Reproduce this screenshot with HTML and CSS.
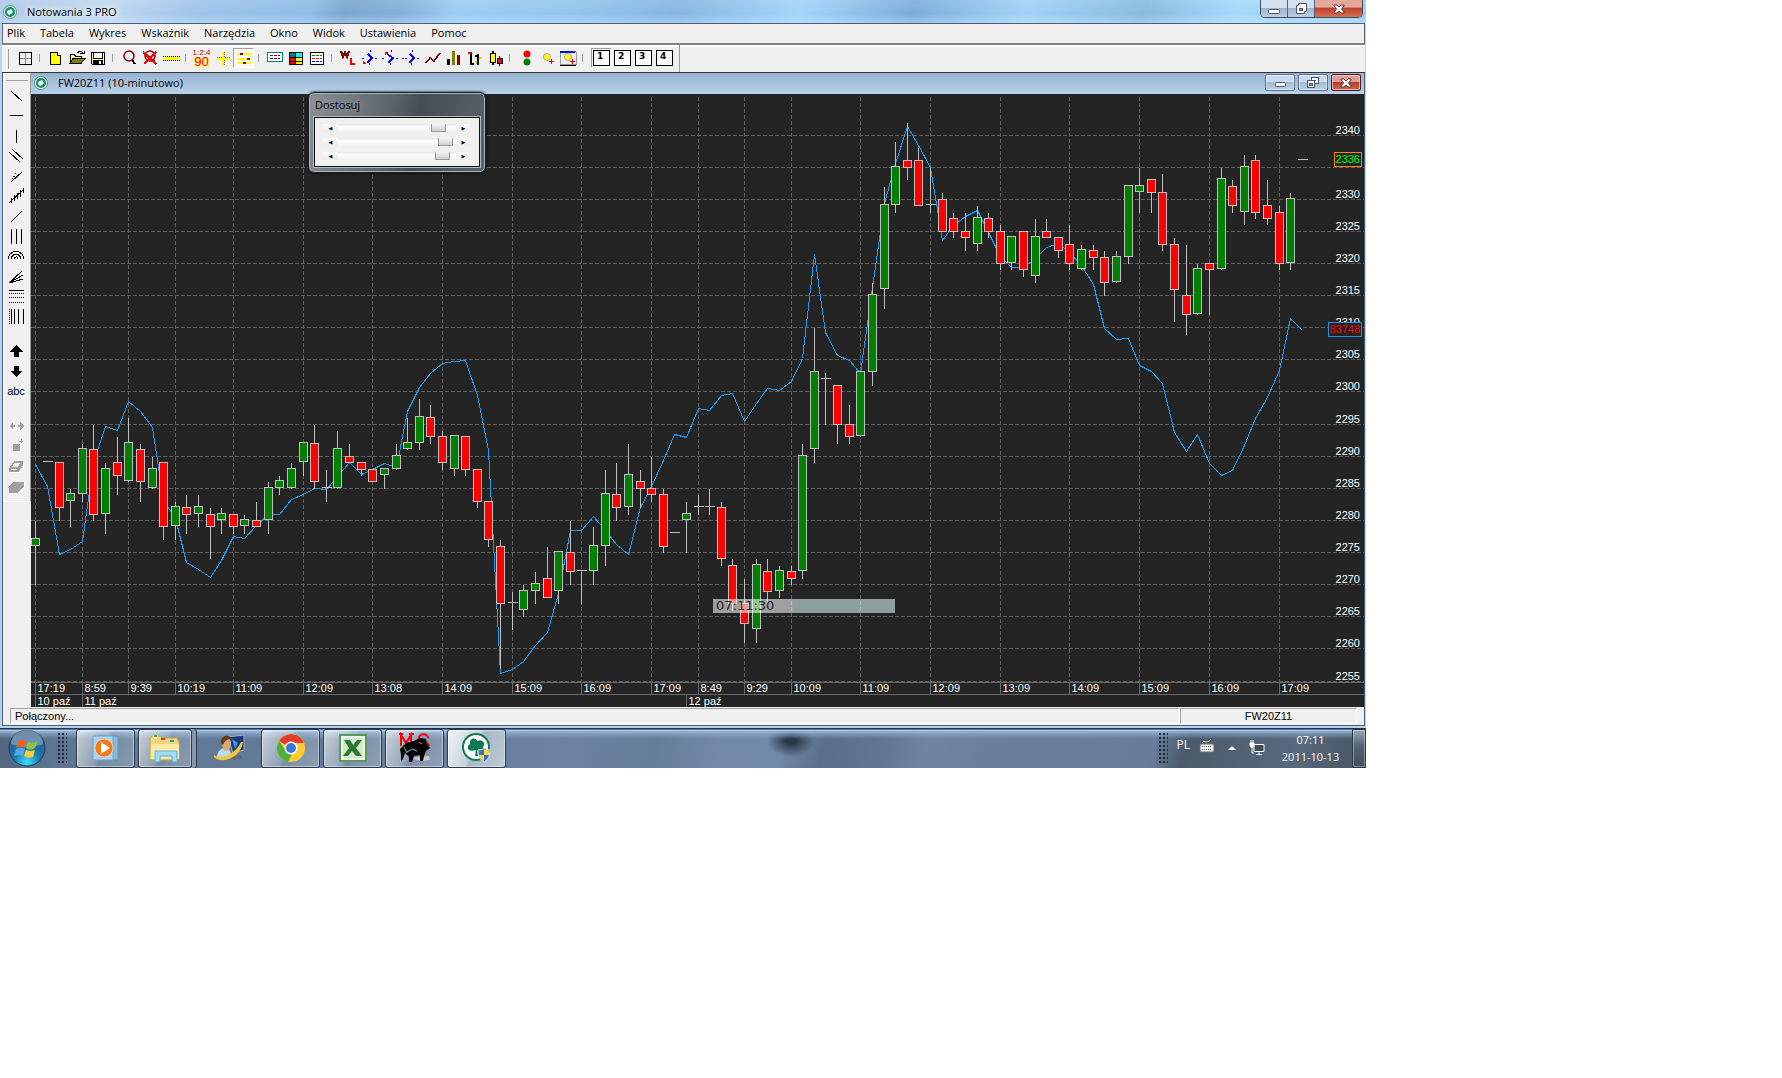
FILE: index.html
```html
<!DOCTYPE html>
<html lang="pl">
<head>
  <meta charset="UTF-8" />
  <title>Notowania 3 PRO</title>
  <link rel="stylesheet" href="styles.css">
</head>
<body>
<div class="desktop">
  <div class="window">
    <header class="titlebar">
      <svg class="logo" viewBox="0 0 14 14"><circle cx="7" cy="7" r="6.5" fill="#e8f4f0" stroke="#5b8a83"/><circle cx="7" cy="7" r="5" fill="#0f8f62"/><path d="M4 6l2-1 2-1 2 3-2 2-2 1-2-2z" fill="#fff"/></svg>
      <h1>Notowania 3 PRO</h1>
      <div class="win-buttons">
        <button class="wb" aria-label="Minimalizuj"><svg viewBox="0 0 14 14"><rect x="1.5" y="7.5" width="11" height="4" rx="1" fill="#fff" stroke="#4a5568"/></svg></button>
        <button class="wb" aria-label="Przywróć"><svg viewBox="0 0 14 14"><path d="M4.5 1.5h8v8h-2v2h-8v-8h2z" fill="#fff" stroke="#4a5568"/><rect x="5.5" y="6.5" width="3" height="2" fill="#9ab" stroke="#4a5568"/></svg></button>
        <button class="wb close" aria-label="Zamknij"><svg viewBox="0 0 14 14"><path d="M2 3h3l2 2 2-2h3v1L9.500 7l2.500 3v1H9L7 9l-2 2H2v-1l2.500-3L2 4z" fill="#fff" stroke="#5a3a40"/></svg></button>
      </div>
    </header>

    <nav class="menu">
      <button>Plik</button><button>Tabela</button><button>Wykres</button><button>Wskaźnik</button><button>Narzędzia</button><button>Okno</button><button>Widok</button><button>Ustawienia</button><button>Pomoc</button>
    </nav>

    <div class="toolbar-row">
      <div class="toolbar">
        <button class="tb" aria-label="Siatka"><svg viewBox="0 0 18 18"><path d="M9.500 3v12M3 9.500h12" stroke="#888"/><rect x="3.5" y="3.5" width="12" height="12" fill="none" stroke="#000"/></svg></button>
        <i class="sep"></i>
        <button class="tb" aria-label="Nowy"><svg viewBox="0 0 18 18"><path d="M3.500 3.500h7l3 3v9h-10z" fill="#ff0" stroke="#000"/><path d="M10.500 3.500v3h3" fill="#fff" stroke="#000"/></svg></button>
        <button class="tb" aria-label="Otwórz"><svg viewBox="0 0 18 18"><path d="M2.500 14.500v-9h4l1 2h6v3" fill="#ff8" stroke="#000"/><path d="M2 14.500l3-5h12l-4 5z" fill="#808000" stroke="#000"/><path d="M9.500 4c2-3 4-2 5 0M12 4.500h4v-3" fill="none" stroke="#000"/></svg></button>
        <button class="tb" aria-label="Zapisz"><svg viewBox="0 0 18 18"><path d="M2.500 3.500h13v12h-12l-1-1z" fill="#ff8" stroke="#000"/><rect x="5" y="4" width="8" height="5" fill="#fff"/><path d="M4.500 4v5.500h9V4" fill="none" stroke="#000"/><rect x="4" y="11" width="10" height="5"/><rect x="10" y="12" width="2" height="3" fill="#fff"/></svg></button>
        <i class="sep"></i>
        <button class="tb" aria-label="Lupa"><svg viewBox="0 0 18 18"><circle cx="9" cy="7" r="5" fill="none" stroke="#800000" stroke-width="1.500"/><path d="M12 11l3 4" stroke="#000" stroke-width="2"/></svg></button>
        <button class="tb" aria-label="Wyłącz lupę"><svg viewBox="0 0 18 18"><circle cx="9" cy="7" r="5" fill="none" stroke="#800000" stroke-width="1.500"/><path d="M12 11l3 4" stroke="#000" stroke-width="2"/><path d="M2 3l13 12M15 3L3 15" stroke="#f00" stroke-width="2.500"/></svg></button>
        <button class="tb" aria-label="Linijka"><svg viewBox="0 0 18 18"><path d="M1 9h17" stroke="#ff0" stroke-width="3"/><path d="M1 7.500h17M1 11h17" stroke="#000" stroke-dasharray="1 1"/></svg></button>
        <i class="sep"></i>
        <button class="tb quote" aria-label="Kursy"><span>1:2:4</span><b>90</b></button>
        <button class="tb" aria-label="Krzyż"><svg viewBox="0 0 18 18"><path d="M9 3v13M3 9.500h13" stroke="#a60" stroke-width="3" stroke-dasharray="1 1"/><path d="M9 3v13M3 9.500h13" stroke="#ff0" stroke-width="2"/></svg></button>
        <button class="tb pressed" aria-label="Dostosuj"><svg viewBox="0 0 18 18"><path d="M2 5h15M2 10h15M2 14h15" stroke="#ff0" stroke-width="2"/><path d="M5 5h3M12 10h3M8 14h3" stroke="#800000" stroke-width="2"/></svg></button>
        <i class="sep"></i>
        <button class="tb" aria-label="Tabela"><svg viewBox="0 0 18 18"><rect x="1.5" y="3.5" width="15" height="9" fill="#fff" stroke="#008080"/><path d="M4 6.500h10M4 9.500h10" stroke="#800000" stroke-dasharray="3 1"/></svg></button>
        <button class="tb" aria-label="Mapa"><svg viewBox="0 0 18 18"><path d="M2 3h14v13H2z"/><path d="M3 4h5v4H3z" fill="#008080"/><path d="M9 4h6v4H9z" fill="#0ff"/><path d="M3 9h5v3H3z" fill="#f00"/><path d="M9 9h6v3H9z" fill="#ff0"/><path d="M3 13h5v2H3z" fill="#f00"/><path d="M9 13h6v2H9z" fill="#ff0"/></svg></button>
        <button class="tb" aria-label="Lista"><svg viewBox="0 0 18 18"><rect x="2.5" y="3.5" width="13" height="12" fill="#fff" stroke="#000"/><path d="M4 6.500h10" stroke="#008000" stroke-dasharray="3 1"/><path d="M4 9.500h10" stroke="#f00" stroke-dasharray="3 1"/><path d="M4 12.500h10" stroke="#00f" stroke-dasharray="3 1"/></svg></button>
        <i class="sep"></i>
        <button class="tb" aria-label="WL"><svg viewBox="0 0 18 18"><path d="M2 2l2 6 2-5 2 5 2-6" fill="none" stroke="#800000" stroke-width="2"/><path d="M12 9v6h4" fill="none" stroke="#f00" stroke-width="2"/></svg></button>
        <button class="tb" aria-label="Strzałka 1"><svg viewBox="0 0 18 18"><path d="M8 5l4 4-5 5" fill="none" stroke="#00f" stroke-width="1.500"/><path d="M2 9h3M15 9h3M10 1v2M9 14v3" stroke="#00f" stroke-dasharray="2 1"/><path d="M3 12v3h3z" fill="#f00"/></svg></button>
        <button class="tb" aria-label="Strzałka 2"><svg viewBox="0 0 18 18"><path d="M6 5l6 4-5 5" fill="none" stroke="#00f" stroke-width="1.500"/><path d="M1 9h3M15 9h3M10 1v2M9 14v3" stroke="#00f" stroke-dasharray="2 1"/><path d="M4 6V3h4z" fill="#f00"/></svg></button>
        <button class="tb" aria-label="Strzałka 3"><svg viewBox="0 0 18 18"><path d="M8 5l4 4-5 5" fill="none" stroke="#00f" stroke-width="1.500"/><path d="M0 9h5M15 9h3M10 1v2M9 14v3" stroke="#00f" stroke-dasharray="2 1"/></svg></button>
        <button class="tb" aria-label="Liniowy"><svg viewBox="0 0 18 18"><path d="M3 14l4-5 4 3 6-8" fill="none" stroke="#800000" stroke-width="1.500"/></svg></button>
        <button class="tb" aria-label="Słupkowy"><svg viewBox="0 0 18 18"><path d="M4.500 10v6" stroke="#000" stroke-width="3"/><path d="M9.500 2v14" stroke="#808000" stroke-width="3"/><path d="M14.500 6v10" stroke="#800000" stroke-width="3"/></svg></button>
        <button class="tb" aria-label="OHLC"><svg viewBox="0 0 18 18"><path d="M6 3v13M6 15h3M13 5v11M10 7h3" stroke="#000" stroke-width="1.500"/><path d="M3 4h3" stroke="#f00" stroke-width="2"/><path d="M14 9h3M11 12v3" stroke="#dd0" stroke-width="2"/></svg></button>
        <button class="tb" aria-label="Świecowy"><svg viewBox="0 0 18 18"><path d="M7 2v14M13.500 7v10" stroke="#000" stroke-width="1.500"/><rect x="4.5" y="4.5" width="5" height="9" fill="#ff0" stroke="#000"/><rect x="11.5" y="9.5" width="5" height="5" fill="#f00" stroke="#000"/></svg></button>
        <i class="sep"></i>
        <button class="tb" aria-label="Sygnały"><svg viewBox="0 0 18 18"><circle cx="10" cy="5" r="3.5" fill="#f00"/><circle cx="10" cy="13" r="3.5" fill="#008000"/></svg></button>
        <button class="tb" aria-label="Dodaj sygnał"><svg viewBox="0 0 18 18"><circle cx="9" cy="8" r="3.5" fill="#ff0" stroke="#aaa"/><path d="M13 10v5M10.500 12.500h5" stroke="#f00"/></svg></button>
        <button class="tb" aria-label="Alarm"><svg viewBox="0 0 18 18"><path d="M1 3v12.500h16V3" fill="#eee" stroke="#999"/><path d="M1 2.500h15" stroke="#00f" stroke-width="2"/><path d="M1 16h16" stroke="#000"/><circle cx="9" cy="8" r="3.5" fill="#ff0" stroke="#aaa"/><path d="M13 10v5M10.500 12.500h5M15 2h2" stroke="#f00"/></svg></button>
        <i class="sep wide"></i>
        <button class="tb num pressed"><span>1</span></button>
        <button class="tb num"><span>2</span></button>
        <button class="tb num"><span>3</span></button>
        <button class="tb num"><span>4</span></button>
      </div>
    </div>

    <main class="workspace">
      <aside class="tools">
        <button aria-label="Linia"><svg viewBox="0 0 18 18"><path d="M4 4l11 10" /></svg></button>
        <button aria-label="Pozioma"><svg viewBox="0 0 18 18"><path d="M3 8.500h13"/></svg></button>
        <button aria-label="Pionowa"><svg viewBox="0 0 18 18"><path d="M9.500 3v13"/></svg></button>
        <button aria-label="Kanał"><svg viewBox="0 0 18 18"><path d="M2 5l11 10M5 2l11 10"/></svg></button>
        <button aria-label="Widły"><svg viewBox="0 0 18 18"><path d="M4 15L15 5"/><path d="M4 15L11 2" stroke-dasharray="1 2"/></svg></button>
        <button aria-label="Regresja"><svg viewBox="0 0 18 18"><path d="M2 16L16 3M4 11v5M7 8v6M10 6v6M13 3v7M16 1v5"/></svg></button>
        <button aria-label="Promień"><svg viewBox="0 0 18 18"><path d="M4 15L15 4"/></svg></button>
        <button aria-label="Cykle"><svg viewBox="0 0 18 18"><path d="M4.500 2v15M9.500 2v15M14.500 2v15"/></svg></button>
        <button aria-label="Łuki"><svg viewBox="0 0 18 18"><path d="M1 12c1-10 15-10 16 0M4 12c1-6 9-6 10 0M7 12c1-3 4-3 4 0"/></svg></button>
        <button aria-label="Wachlarz"><svg viewBox="0 0 18 18"><path d="M2 16L15 4M2 16l14-8M2 16l14-4"/></svg></button>
        <button aria-label="Fibonacci"><svg viewBox="0 0 18 18"><path d="M2 3.500h15"/><path d="M2 6.500h15M2 10.500h15M2 15.500h15" stroke-dasharray="1 1"/></svg></button>
        <button aria-label="Strefy czasu"><svg viewBox="0 0 18 18"><path d="M2.500 2v15" stroke-dasharray="1 1"/><path d="M4.500 2v15M7.500 2v15M11.500 2v15M16.500 2v15"/></svg></button>
        <i class="gap"></i>
        <button aria-label="W górę"><svg viewBox="0 0 18 18"><path d="M9.500 4l5 5h-3v5h-4V9h-3z" fill="#000"/></svg></button>
        <button aria-label="W dół"><svg viewBox="0 0 18 18"><path d="M9.500 14l5-5h-3V4h-4v5h-3z" fill="#000"/></svg></button>
        <button class="abc">abc</button>
        <i class="gap"></i>
        <button class="off" aria-label="Przesuń"><svg viewBox="0 0 18 18"><path d="M2 9l4-4v3h2v2H6v3zM17 9l-4-4v3h-2v2h2v3z" stroke="none"/></svg></button>
        <button class="off" aria-label="Powiel"><svg viewBox="0 0 18 18"><path d="M6 7h6v6H6zM12 4.500h4M14.500 2v4"/></svg></button>
        <button class="off" aria-label="Gumka"><svg viewBox="0 0 18 18"><path d="M2.500 11.500l5-7h8v4l-4 6h-9z"/><path d="M5 10l2-4h6l-2 4zM4 12h6v1H4z" fill="#f0f0f0" stroke="none"/></svg></button>
        <button class="off" aria-label="Usuń wszystko"><svg viewBox="0 0 18 18"><path d="M2 10l5-5h9l-5 5zM2 11v4h9l5-5V6l-5 5z"/></svg></button>
      </aside>

      <section class="child">
        <header class="child-title">
          <svg class="logo" viewBox="0 0 14 14"><circle cx="7" cy="7" r="6.5" fill="#e8f4f0" stroke="#5b8a83"/><circle cx="7" cy="7" r="5" fill="#0f8f62"/><path d="M4 6l2-1 2-1 2 3-2 2-2 1-2-2z" fill="#fff"/></svg>
          <h2>FW20Z11 (10-minutowo)</h2>
          <div class="child-buttons">
            <button class="cb" aria-label="Minimalizuj"><svg viewBox="0 0 14 14"><rect x="2.5" y="6.5" width="10" height="4" rx="1" fill="#fff" stroke="#4a5568"/></svg></button>
            <button class="cb" aria-label="Przywróć"><svg viewBox="0 0 14 14"><rect x="5.5" y="1.5" width="7" height="6" fill="#fff" stroke="#4a5568"/><rect x="8" y="4" width="2" height="1" fill="#4a5568"/><rect x="1.5" y="4.5" width="7" height="7" fill="#fff" stroke="#4a5568"/><rect x="3.5" y="7.5" width="3" height="2" fill="#9ab" stroke="#4a5568"/></svg></button>
            <button class="cb close" aria-label="Zamknij"><svg viewBox="0 0 14 14"><path d="M2 3h3l2 2 2-2h3v1L9.500 7l2.500 3v1H9L7 9l-2 2H2v-1l2.500-3L2 4z" fill="#fff" stroke="#5a3a40"/></svg></button>
          </div>
        </header>
        <div class="chart">
          <svg id="plot" viewBox="31 94 1333 613"></svg>
          <div class="timer"><span>07:11:30</span></div>
        </div>

        <div class="adjust">
          <h3>Dostosuj</h3>
          <div class="adjust-body">
            <div class="scroll"><button aria-label="Mniej">◀</button><input type="range" aria-label="Skala" value="90"><button aria-label="Więcej">▶</button></div>
            <div class="scroll"><button aria-label="Mniej">◀</button><input type="range" aria-label="Zakres" value="97"><button aria-label="Więcej">▶</button></div>
            <div class="scroll"><button aria-label="Mniej">◀</button><input type="range" aria-label="Pozycja" value="94"><button aria-label="Więcej">▶</button></div>
          </div>
        </div>
      </section>
    </main>

    <footer class="status">
      <div class="status-main">Połączony...</div>
      <div class="status-symbol">FW20Z11</div>
    </footer>
  </div>

  <div class="taskbar">
    <button class="start" aria-label="Start"><svg viewBox="0 0 40 40"><defs><radialGradient id="orb" cx="50%" cy="90%" r="85%"><stop offset="0" stop-color="#3fe0ff"/><stop offset=".45" stop-color="#1674ae"/><stop offset="1" stop-color="#345a80"/></radialGradient></defs><circle cx="20" cy="20" r="18" fill="url(#orb)" stroke="#1d3c5c"/><path d="M4 16a16 15 0 0 1 32 0q-16 6-32 0z" fill="#fff" opacity=".3"/><path d="M11 13q5-3 9 0l-2 7q-5-3-9 0z" fill="#f0642a"/><path d="M21 14q5 2 10-1l-3 7q-4 3-9 0z" fill="#8cc63e"/><path d="M9 21q4-3 9 0l-2 7q-4-2-9 0z" fill="#58a6ea"/><path d="M19 22q4 2 9 0l-2 7q-5 2-9-1z" fill="#fccc34"/></svg></button>
    <i class="dots"></i>
    <button class="task" aria-label="Media Player"><svg viewBox="0 0 32 32"><path d="M8 4h20v24H8z" fill="#8ab8d8" stroke="#5b93bd"/><path d="M3 4h20v24H3z" fill="#a9d3ee" stroke="#6da7cf"/><circle cx="14" cy="16" r="9" fill="#f47a1c" stroke="#fbc9a0"/><path d="M11 10l9 6-9 6z" fill="#fff"/></svg></button>
    <button class="task stack" aria-label="Eksplorator"><svg viewBox="0 0 32 32"><path d="M1 7l2-3h8l2 2h15l2 4v18H1z" fill="#f0d67a" stroke="#c9a33f"/><path d="M4 3h5v3H4z" fill="#fff"/><path d="M5 3h3v2H5z" fill="#2a4"/><path d="M12 6h4v2h-4z" fill="#d33"/><path d="M21 8h4v2h-4z" fill="#28d"/><path d="M2 12h28v15H2z" fill="#fbe9a6"/><path d="M6 30V19h22v11h-5v-6H11v6z" fill="#9fdcf5" stroke="#5aaed6"/></svg></button>
    <button class="task plain" aria-label="Komunikator"><svg viewBox="0 0 32 32"><path d="M15 5l16-2v15l-11 3z" fill="#123a7c" stroke="#aab"/><path d="M19 7l6 4-3 6z" fill="#4f8fe0"/><path d="M18 25l10-2 1 3-10 2z" fill="#667"/><path d="M4 26c0-7 4-10 8-10s6 3 6 9z" fill="#b8dcf0"/><path d="M9 10c0-5 8-6 9 0 0 5-2 9-5 9s-4-5-4-9z" fill="#d9a877"/><path d="M8 11c-1-8 9-10 11-3-4-2-7 0-9 5z" fill="#5b3c1e"/><path d="M1 23c6 5 21 0 27-13h2c-2 15-20 23-29 15z" fill="#f2c730"/></svg></button>
    <button class="task" aria-label="Chrome"><svg viewBox="0 0 32 32"><circle cx="16" cy="16" r="14" fill="#fc3"/><path d="M16 16L4 9A14 14 0 0 1 29 11H16z" fill="#e33b2e"/><path d="M4 9l7 10 6 3-4 8A14 14 0 0 1 4 9z" fill="#4fae3e"/><circle cx="16" cy="16" r="6.5" fill="#fff"/><circle cx="16" cy="16" r="5" fill="#3b78d8"/></svg></button>
    <button class="task" aria-label="Excel"><svg viewBox="0 0 32 32"><path d="M2 2h28v28H2z" fill="#5a9a58"/><path d="M4 4h24v24H4z" fill="#eef7ea"/><path d="M6 6h20v20H6z" fill="#d4e8ce"/><path d="M7 8h6l3 5 4-5h5l-6 8 6 8h-6l-4-5-4 5H6l6-8z" fill="#2c7a32"/></svg></button>
    <button class="task" aria-label="MetaStock"><svg viewBox="0 0 32 32"><path d="M10 26l20-2 1 4-8 1z" fill="#ccc"/><path d="M2 14V3l5 8 5-8v11M0 2h4M10 2h5M29 6c0-5-9-5-9 0s10 3 10 8" fill="none" stroke="#f00" stroke-width="2"/><path d="M1 17l6-6 8-2 6-3 6 1 1 5 3 4-4 3-2 5-1 5h-3v-6l-6 1-2 6h-3v-5l-4-4-2 6-2 2v-6z"/><path d="M8 20l5-3 5 2M20 10l3 2M5 15l3 6" stroke="#5ad0d0" fill="none"/></svg></button>
    <button class="task active" aria-label="Notowania 3 PRO"><svg viewBox="0 0 32 32"><circle cx="15" cy="15" r="14" fill="#0c7a52"/><circle cx="15" cy="15" r="12" fill="#fff"/><path d="M14 24l1-6c-9 3-10-4-6-6-1-6 6-7 7-3 6-3 9 3 6 6 3 5-4 6-6 3l1 6z" fill="#0c7a52"/><path d="M17 18q5 0 6-2 2 2 6 2 0 9-6 12-6-3-6-12z" fill="#2f74d0" stroke="#dde"/><path d="M23 17q2 1 5 1.500V23h-5zM18 23h5v6q-4-2-5-6z" fill="#ffd83a"/></svg></button>
    <div class="tray">
      <i class="dots"></i>
      <span class="lang">PL</span>
      <svg class="kbd" viewBox="0 0 16 16"><path d="M3 5c3-4 5 2 9-4" fill="none" stroke="#ccc"/><rect x="1" y="6" width="14" height="8" rx="1" fill="#eee" stroke="#666"/><path d="M3 8.500h10M3 11.500h10" stroke="#555" stroke-dasharray="1 1"/></svg>
      <svg class="up" viewBox="0 0 8 8"><path d="M0 6l4-4 4 4z" fill="#fff"/></svg>
      <svg class="net" viewBox="0 0 16 16"><path d="M5 4.500h10v7H5zM7 14.500h6M10 12v2M3 8v5h2" fill="#3a4a5c" stroke="#fff"/><path d="M1 3h4v3L3 8 1 6zM2 0v3M4 0v3" fill="#fff" stroke="#fff"/></svg>
      <div class="clock"><span>07:11</span><span>2011-10-13</span></div>
      <button class="show" aria-label="Pokaż pulpit"></button>
    </div>
  </div>
</div>
<script src="chart.js"></script>
</body>
</html>
```
FILE: styles.css
```css
* { box-sizing: border-box; }
body { margin: 0; background: #fff; font-family: "Open Sans", "Noto Sans", sans-serif; font-size: 11px; color: #000; }
button { margin: 0; padding: 0; border: 0; background: none; font: inherit; color: inherit; }
h1, h2, h3 { margin: 0; font-size: 11px; font-weight: normal; }
svg { display: block; }

.desktop { max-width: 1366px; }
.window { background: #f0f0f0; border: solid #b9d1ea; border-width: 0 1px 2px 2px; }
.logo { width: 14px; height: 14px; }

/* title bar */
.titlebar {
  display: flex; align-items: center; height: 23px; padding: 0 1px 0 3px; gap: 10px; margin: 0 -1px 0 -2px;
  background:
    linear-gradient(rgba(255,255,255,.1), rgba(255,255,255,0) 60%, rgba(220,240,255,.35)),
    linear-gradient(100deg, #b0cbe6 0, #c0d8f0 110px, #9cc4ea 200px, #8fbce6 310px, #7aa6d0 340px, #86b0da 400px, #9ccdf5 450px, #93c6ee 560px, #86b6e0 670px, #a3d5fa 790px, #7badd9 900px, #a2d2f5 1010px, #86bbdf 1130px, #a4dafb 1220px, #9ccdf0 100%);
}
.titlebar h1 { flex: 1; text-shadow: 0 0 6px #fff, 0 0 6px #fff; }
.win-buttons { display: flex; align-self: flex-start; height: 18px; margin-right: 2px; border: 1px solid #3f4c60; border-top: 0; border-radius: 0 0 5px 5px; overflow: hidden; }
.wb { display: grid; place-items: center; width: 27px; border-right: 1px solid #54647c; background: linear-gradient(#d3dfed 45%, #9fb3cd 50%, #b9cde4); }
.wb svg, .cb svg { width: 14px; height: 14px; }
.wb.close { width: 47px; border: 0; background: linear-gradient(#e3a89b 40%, #c5402c 50%, #d47257); }

/* menu */
.menu { display: flex; height: 20px; border-top: 1px solid #49607a; border-left: 1px solid #5c6c80; border-right: 1px solid #5c6c80; }
.menu button { padding: 0 7px 3px 8px; }
.menu button:first-child { padding-left: 4px; }

/* toolbar */
.toolbar-row { height: 30px; border-top: 2px solid #808080; border-bottom: 1px solid #333; box-shadow: inset 0 2px #fff; }
.toolbar { display: flex; align-items: center; width: max-content; height: 27px; padding: 0 4px 1px 12px; border-right: 1px solid #999; background: linear-gradient(#a0a0a0, #a0a0a0) 6px 4px / 1px 20px no-repeat; }
.tb { display: grid; place-items: center; width: 21px; height: 20px; }
.tb svg { width: 18px; height: 18px; shape-rendering: crispEdges; }
.tb circle { shape-rendering: auto; }
.tb.pressed { border: 1px solid #a0a0a0; border-right-color: #fff; border-bottom-color: #fff; background: #f8f8f8; }
.sep { width: 10px; height: 8px; background: linear-gradient(#a0a0a0, #a0a0a0) 4px 0 / 1px 8px no-repeat; }
.sep.wide { width: 13px; }
.quote { font: 8px/8px "Liberation Sans", sans-serif; color: #c00; align-content: center; }
.quote b { font-size: 13px; line-height: 10px; font-weight: normal; color: #f00; background: #fe8; }
.num span { width: 17px; height: 16px; border: 1px solid #000; background: #fff; text-align: left; padding-left: 3px; font: bold 9px/11px "DejaVu Sans", sans-serif; }

/* workspace */
.workspace { display: flex; border-left: 1px solid #49607a; border-right: 1px solid #49607a; }
.tools { display: flex; flex-direction: column; align-items: center; align-self: flex-start; width: 28px; padding: 12px 2px 5px 0; border: 1px solid #fff; border-right-color: #999; background: linear-gradient(#a0a0a0, #a0a0a0) 2px 6px / 22px 1px no-repeat; }
.tools button { display: grid; place-items: center; width: 22px; height: 20px; }
.tools svg { width: 18px; height: 18px; fill: none; stroke: #000; shape-rendering: crispEdges; }
.tools .gap { height: 15px; }
.tools .off svg { fill: #a0a0a0; stroke: #a0a0a0; filter: drop-shadow(1px 1px #fff); }
.tools .abc { font: 11px "Liberation Sans", sans-serif; }
.child { position: relative; flex: 1; min-width: 0; }
.child-title { display: flex; align-items: center; gap: 10px; height: 21px; padding: 0 3px 2px; background: linear-gradient(#98b3d1, #b9d1ea); }
.child-title h2 { flex: 1; }
.child-buttons { display: flex; gap: 3px; }
.cb { display: grid; place-items: center; width: 30px; height: 17px; border: 1px solid #5f7390; border-radius: 2px; background: linear-gradient(#c9dbee 45%, #a2bad6 50%, #bcd2ea); box-shadow: inset 0 0 0 1px rgba(255,255,255,.5); }
.cb.close { border-color: #4e1a20; background: linear-gradient(#e39c90 45%, #bb3c2c 50%, #cf6a50); }

/* chart */
.chart { position: relative; background: #242424; }
#plot { width: 100%; shape-rendering: crispEdges; font: 11px "Liberation Sans", sans-serif; fill: #fff; }
.grid { stroke: #606060; stroke-dasharray: 4 2; }
.axis { stroke: #696969; fill: none; }
.wick { stroke: #c0c0c0; }
.up-body { fill: #008000; stroke: #c0c0c0; }
.down-body { fill: #f00; stroke: #c0c0c0; }
.volume { fill: none; stroke: #1c9cf4; }
.last { fill: #242424; stroke: #ff8000; }
.last-text { fill: #0f0; }
.oi { fill: #242424; stroke: #1c94e8; }
.oi-text { fill: #f00; }
.timer { position: absolute; left: 682px; top: 505px; width: 182px; height: 14px; background: linear-gradient(90deg, rgba(255,255,255,.56) 80px, rgba(225,255,255,.56) 80px); color: #222; font: 13px/14px "DejaVu Sans", sans-serif; }
.timer span { padding-left: 3px; }

/* floating panel with three scrollbars */
.adjust { position: absolute; left: 277px; top: 19px; width: 178px; padding: 2px 5px 5px; border: 1px solid #1c2026; border-radius: 6px; background: linear-gradient(100deg, #8a8f96, #5d636b 45%, #454c55 60%, #5a626c); box-shadow: inset 0 0 0 1px #a8b0ba, 0 0 3px #000; }
.adjust h3 { height: 22px; line-height: 20px; padding-left: 1px; text-shadow: 0 0 8px #bbb; }
.adjust-body { display: flex; flex-direction: column; gap: 6px; height: 50px; padding: 6px 8px 4px; border: 1px solid #111; background: #f0f0f0; box-shadow: 0 0 0 1px #b4bac2; }
.scroll { display: flex; align-items: center; height: 8px; background: linear-gradient(#fafafa, #ececec); }
.scroll button { width: 15px; height: 8px; font: 5px/8px "DejaVu Sans", sans-serif; }
.scroll input { -webkit-appearance: none; appearance: none; flex: 1; min-width: 0; height: 8px; margin: 0; background: linear-gradient(#e6e6e6, #fff 3px, #eee); }
.scroll input::-webkit-slider-thumb { -webkit-appearance: none; width: 15px; height: 8px; border: 1px solid #979797; border-top: 0; border-radius: 1px; background: linear-gradient(#f4f4f4, #cfcfcf); }

/* status */
.status { display: flex; height: 19px; padding: 1px 7px; border: 1px solid #49607a; border-top: 0; font: 11px/15px "Liberation Sans", sans-serif; }
.status div { border: 1px solid #a0a0a0; border-right-color: #fff; border-bottom-color: #fff; }
.status-main { flex: 1; padding-left: 4px; }
.status-symbol { width: 177px; text-align: center; }

/* taskbar */
.taskbar {
  display: flex; align-items: center; height: 40px; color: #fff;
  background:
    linear-gradient(#1f3247 1px, #a9c8ea 2px, rgba(150,185,225,.6) 5px, rgba(120,150,185,0) 11px),
    radial-gradient(ellipse 24px 16px at 791px 13px, #2b3a4a 20%, rgba(60,80,100,0)),
    linear-gradient(105deg, #50647a 0, #5d7690 60px, #6a82a0 560px, #647d98 640px, #728aa8 700px, #7189a8 760px, #5b7088 800px, #61778f 860px, #70859f 900px, #6a8098 960px, #677c98 1120px, #4b5b6c 1150px, #57697c 1260px, #465361 100%);
}
.start { width: 40px; height: 40px; margin-left: 7px; }
.dots { width: 9px; height: 30px; background: radial-gradient(circle at 1px 1px, #1c2733 1px, transparent 1px) 0 0 / 4px 4px; }
.start + .dots { margin: 0 9px 0 11px; }
.task { display: grid; place-items: center; width: 59px; height: 39px; margin-right: 3px; border: 1px solid #2c3a4a; border-radius: 3px; background: linear-gradient(115deg, rgba(255,255,255,.65), rgba(255,255,255,.3) 45%, rgba(255,255,255,.15) 50%, rgba(255,255,255,.25)); box-shadow: inset 0 0 0 1px rgba(255,255,255,.45); }
.task svg { width: 32px; height: 32px; }
.task.stack { width: 54px; margin-right: 7px; box-shadow: inset 0 0 0 1px rgba(255,255,255,.45), 4px 0 0 #8497ad, 5px 0 0 #2c3a4a; }
.task.plain { border-color: transparent; background: none; box-shadow: none; }
.task.active { background: linear-gradient(115deg, #f2f5f8, #c8d2dc 45%, #a9b8c6 50%, #bccad6); }
.tray { display: flex; align-items: center; margin-left: auto; height: 40px; }
.lang { margin: 0 9px 6px 9px; font-size: 12px; line-height: 14px; }
.kbd { width: 16px; height: 16px; margin-bottom: 4px; }
.up { width: 8px; height: 8px; margin: 2px 13px; }
.net { width: 16px; height: 16px; }
.clock { display: grid; width: 87px; padding-left: 4px; text-align: center; line-height: 17px; }
.show { width: 14px; height: 39px; border: 1px solid #2c3845; background: linear-gradient(#97a8b8, #566677 40%, #3f4d5b); box-shadow: inset 0 0 0 1px rgba(255,255,255,.35); }
```
FILE: chart.js
```js
// [kolor, max, góra korpusu, dół korpusu, min]; d = doji
const candles = `g 2280 2277 2276 2270|d 2289 2289 2289 2289|r 2289 2289 2282 2280|g 2285 2284 2283 2279|g 2292 2291 2284 2283|r 2295 2291 2281 2280|g 2289 2288 2281 2278|r 2293 2289 2287 2284|g 2296 2292 2286 2286|r 2292 2291 2286 2283
g 2290 2288 2285 2285|r 2289 2289 2279 2277|g 2283 2282 2279 2277|r 2284 2282 2281 2278|g 2284 2282 2281 2279|r 2282 2281 2279 2274|g 2282 2281 2280 2278|r 2281 2281 2279 2278|g 2281 2280 2279 2278|r 2283 2280 2279 2279
g 2286 2285 2280 2278|g 2287 2286 2285 2284|g 2289 2288 2285 2285|g 2292 2292 2289 2287|r 2295 2292 2286 2285|d 2288 2285 2285 2283|g 2294 2291 2285 2285|r 2292 2290 2289 2289|r 2289 2289 2288 2287|r 2288 2288 2286 2286
g 2288 2288 2287 2285|g 2292 2290 2288 2288|g 2296 2292 2291 2291|g 2299 2296 2292 2291|r 2298 2296 2293 2292|r 2294 2293 2289 2288|g 2293 2293 2288 2287|r 2293 2293 2288 2287|r 2288 2288 2283 2282|r 2283 2283 2277 2276
r 2277 2276 2267 2257|d 2269 2267 2267 2263|g 2270 2269 2266 2265|g 2272 2270 2269 2267|r 2276 2271 2268 2268|g 2275 2275 2269 2267|r 2280 2275 2272 2270|d 2272 2272 2272 2267|g 2279 2276 2272 2270|g 2288 2284 2276 2273
r 2289 2284 2282 2280|g 2292 2287 2282 2281|r 2288 2286 2285 2282|r 2290 2285 2284 2283|r 2285 2284 2276 2275|d 2278 2278 2278 2278|g 2283 2281 2280 2275|d 2284 2282 2282 2281|d 2285 2282 2282 2281|r 2283 2282 2274 2273
r 2274 2273 2267 2266|r 2271 2267 2264 2261|g 2274 2273 2263 2261|r 2274 2272 2269 2267|g 2273 2272 2269 2268|r 2273 2272 2271 2270|g 2292 2290 2272 2271|g 2310 2303 2291 2289|d 2303 2302 2302 2295|r 2301 2301 2295 2292
r 2298 2295 2293 2292|g 2303 2303 2293 2293|g 2317 2315 2303 2301|g 2332 2329 2316 2313|g 2339 2335 2329 2328|r 2342 2336 2335 2333|r 2338 2336 2329 2329|d 2335 2329 2329 2328|r 2331 2330 2325 2325|r 2328 2327 2325 2324
r 2328 2325 2324 2322|g 2329 2327 2323 2322|r 2328 2327 2325 2324|r 2326 2325 2320 2319|g 2324 2324 2320 2319|r 2325 2325 2319 2318|g 2327 2324 2318 2317|r 2327 2325 2324 2324|r 2324 2324 2322 2321|r 2326 2323 2320 2319
g 2323 2322 2319 2319|r 2323 2322 2321 2319|r 2322 2321 2317 2315|g 2322 2321 2317 2317|g 2332 2332 2321 2320|g 2335 2332 2331 2328|r 2333 2333 2331 2328|r 2334 2331 2323 2322|r 2324 2323 2316 2311|r 2323 2315 2312 2309
g 2320 2319 2312 2312|r 2320 2320 2319 2312|g 2335 2333 2319 2319|r 2333 2332 2329 2328|g 2337 2335 2328 2326|r 2337 2336 2328 2327|r 2333 2329 2327 2326|r 2329 2328 2320 2319|g 2331 2330 2320 2319|d 2336 2336 2336 2336`
  .split(/[|\n]/).map(s => s.split(' '));

// niebieska linia, współrzędne y
const line = [464,486,554,549,541,462,426,430,401,411,427,500,518,562,569,577,560,536,538,525,514,514,499,494,488,489,476,462,474,469,463,467,411,387,373,363,361,360,395,450,673,669,661,645,632,593,530,530,516,530,544,554,507,486,460,434,437,408,410,395,393,421,403,388,390,381,358,254,332,355,360,373,287,203,163,126,145,167,240,225,216,210,232,256,267,267,258,247,243,252,265,284,328,339,338,365,371,383,432,451,434,463,475,470,445,418,397,370,318,330];

const times = [[0,'17:19'],[4,'8:59'],[8,'9:39'],[12,'10:19'],[17,'11:09'],[23,'12:09'],[29,'13:08'],[35,'14:09'],[41,'15:09'],[47,'16:09'],[53,'17:09'],[57,'8:49'],[61,'9:29'],[65,'10:09'],[71,'11:09'],[77,'12:09'],[83,'13:09'],[89,'14:09'],[95,'15:09'],[101,'16:09'],[107,'17:09']];
const days = [[0,'10 paź'],[4,'11 paź'],[56,'12 paź']];

const px = i => Math.floor(35.8 + i * 11.62) + 0.5;
const py = p => Math.floor(135 + (2340 - p) * 6.424) + 0.5;
let out = '';

for (let p = 2340; p >= 2255; p -= 5) {
  out += `<line class="grid" x1="31" x2="1364" y1="${py(p)}" y2="${py(p)}"/>`;
}
times.forEach(([i, t]) => {
  out += `<line class="grid" x1="${px(i)}" x2="${px(i)}" y1="97" y2="682"/>`;
  out += `<line class="axis" x1="${px(i)}" x2="${px(i)}" y1="682" y2="694"/>`;
  out += `<text x="${px(i) + 2}" y="692">${t}</text>`;
});
days.forEach(([i, t]) => {
  out += `<line class="axis" x1="${px(i)}" x2="${px(i)}" y1="694" y2="707"/>`;
  out += `<text x="${px(i) + 2}" y="705">${t}</text>`;
});
out += '<path class="axis" d="M31 682.5H1364M31 694.5H1364"/>';
out += `<polyline class="volume" points="${line.map((y, i) => px(i) + ',' + (y + 0.5)).join(' ')}"/>`;

candles.forEach(([c, h, t, b, l], i) => {
  const x = px(i);
  // korpusy wzrostowe i doji leżą piksel wyżej
  const up = c === 'r' ? 0 : 1;
  if (h !== l) out += `<line class="wick" x1="${x}" x2="${x}" y1="${py(h)}" y2="${py(l)}"/>`;
  if (c === 'd') {
    out += `<line class="wick" x1="${x - 5}" x2="${x + 5}" y1="${py(t) - up}" y2="${py(t) - up}"/>`;
  } else {
    out += `<rect class="${c === 'g' ? 'up' : 'down'}-body" x="${x - 4}" y="${py(t) - up}" width="8" height="${py(b) - py(t)}"/>`;
  }
});

for (let p = 2340; p >= 2255; p -= 5) {
  if (p !== 2335) out += `<text x="1360" y="${py(p) - 1.5}" text-anchor="end">${p}</text>`;
}
out += '<rect class="last" x="1334.5" y="152.5" width="27" height="14"/><text class="last-text" x="1360" y="163" text-anchor="end">2336</text>';
out += '<rect class="oi" x="1328.5" y="322.5" width="33" height="14"/><text class="oi-text" x="1360" y="333" text-anchor="end">83748</text>';
document.getElementById('plot').innerHTML = out;
```
